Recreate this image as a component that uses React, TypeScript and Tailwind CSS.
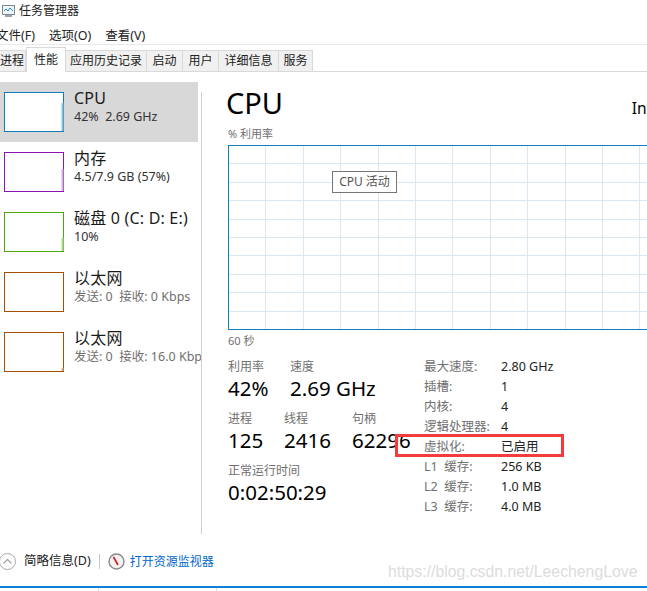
const font = "font-['Noto_Sans','Noto_Sans_CJK_SC',sans-serif]";

function Thumb({ border, fill, fillH }: { border: string; fill: string; fillH: number }) {
  return (
    <svg width="60" height="40" className="shrink-0 block">
      <rect x="0.5" y="0.5" width="59" height="39" fill="white" stroke={border} />
      {fillH > 0 && <rect x="57.5" y={39 - fillH} width="2" height={fillH} fill={fill} />}
    </svg>
  );
}

function SideItem(p: {
  active?: boolean;
  title: string;
  sub: string;
  subMuted?: boolean;
  border: string;
  fill: string;
  fillH: number;
}) {
  return (
    <div className={`flex h-[60px] w-[198px] items-start pl-1 pt-[10px] whitespace-pre ${p.active ? "bg-[#d8d8d8]" : ""}`}>
      <Thumb border={p.border} fill={p.fill} fillH={p.fillH} />
      <div className="ml-[10px] -mt-[5px] flex flex-col">
        <div className="text-[16px] leading-[22px] tracking-[0.2px] text-[#1a1a1a]">{p.title}</div>
        <div className={`text-[12.5px] leading-[16px] ${p.subMuted ? "text-[#707070]" : "text-[#333]"}`}>{p.sub}</div>
      </div>
    </div>
  );
}

function Tab({ label, w, active }: { label: string; w: string; active?: boolean }) {
  return (
    <div
      className={`flex items-center justify-center text-[12px] text-[#222] border-r border-r-[#d9d9d9] ${w} ${
        active
          ? "h-[25px] bg-white border-x border-t border-[#d9d9d9] relative z-10 -mb-px"
          : "h-[21px] bg-[#f0f0f0] border-t border-t-[#d9d9d9]"
      }`}
    >
      {label}
    </div>
  );
}

function Stat({ label, value, w }: { label: string; value: string; w: string }) {
  return (
    <div className={`flex flex-col whitespace-nowrap ${w}`}>
      <div className="text-[12px] leading-[16px] text-[#707070]">{label}</div>
      <div className="text-[20.5px] leading-[27px] text-black">{value}</div>
    </div>
  );
}

function Spec({ k, v }: { k: string; v: string }) {
  return (
    <div className="flex h-[20px] items-center whitespace-pre">
      <div className="w-[77px] text-[12.5px] text-[#707070]">{k}</div>
      <div className="text-[12.5px] text-[#222]">{v}</div>
    </div>
  );
}

function Chart() {
  const xs = [37.4, 74.8, 112.2, 149.6, 187, 224.4, 261.8, 299.2, 336.6, 374, 411.4];
  const ys = [18.4, 36.8, 55.2, 73.6, 92, 110.4, 128.8, 147.2, 165.6];
  return (
    <svg width="419" height="185" className="block">
      <rect width="419" height="185" fill="white" />
      {xs.map((x) => (
        <line key={x} x1={Math.round(x) + 0.5} x2={Math.round(x) + 0.5} y1="0" y2="185" stroke="#d9e8f2" />
      ))}
      {ys.map((y) => (
        <line key={y} x1="0" x2="419" y1={Math.round(y) + 0.5} y2={Math.round(y) + 0.5} stroke="#d9e8f2" />
      ))}
      <line x1="0" x2="419" y1="0.5" y2="0.5" stroke="#117dbb" />
      <line x1="0" x2="419" y1="184.5" y2="184.5" stroke="#117dbb" />
      <line x1="0.5" x2="0.5" y1="0" y2="185" stroke="#117dbb" />
    </svg>
  );
}

export default function App() {
  return (
    <div className={`relative h-[591px] w-[647px] overflow-hidden bg-white ${font}`}>
      {/* title bar */}
      <div className="flex h-[28px] items-start pt-[2px]">
        <svg width="15" height="15" viewBox="0 0 15 15" className="ml-[1px] mt-[1px]">
          <rect x="1.5" y="2.5" width="12" height="9" fill="#eef5f9" stroke="#7a8b96" />
          <polyline points="3,8 5,6 7,8 9,5 12,8" fill="none" stroke="#2f86b8" />
          <rect x="4" y="12" width="7" height="2" fill="#9aa5ad" />
        </svg>
        <span className="ml-[3px] text-[12px] leading-[18px] text-[#222]">任务管理器</span>
      </div>
      {/* menu */}
      <div className="flex h-[16px] items-center gap-[14px] -ml-[4px] text-[12.5px] text-[#222] whitespace-nowrap">
        <span>文件(F)</span>
        <span>选项(O)</span>
        <span>查看(V)</span>
      </div>
      {/* tabs */}
      <div className="h-px bg-[#e8e8e8]" />
      <div className="flex h-[27px] items-end border-b border-[#d9d9d9] -ml-[1px]">
        <Tab label="进程" w="w-[27px]" />
        <Tab label="性能" w="w-[40px]" active />
        <Tab label="应用历史记录" w="w-[81px]" />
        <Tab label="启动" w="w-[36px]" />
        <Tab label="用户" w="w-[36px]" />
        <Tab label="详细信息" w="w-[60px]" />
        <Tab label="服务" w="w-[34px]" />
      </div>
      {/* body */}
      <div className="flex h-[462px]">
        <div className="flex w-[201px] shrink-0 flex-col overflow-hidden pt-[10px]">
          <SideItem active title="CPU" sub="42%  2.69 GHz" border="#117dbb" fill="#8fc1dd" fillH={28} />
          <SideItem title="内存" sub="4.5/7.9 GB (57%)" border="#8b12ae" fill="#d2b3de" fillH={22} />
          <SideItem title="磁盘 0 (C: D: E:)" sub="10%" border="#4da60c" fill="#b3d99a" fillH={13} />
          <SideItem title="以太网" sub="发送: 0  接收: 0 Kbps" subMuted border="#a74f01" fill="#d9b48f" fillH={0} />
          <SideItem title="以太网" sub="发送: 0  接收: 16.0 Kbps" subMuted border="#a74f01" fill="#d9b48f" fillH={3} />
        </div>
        <div className="mt-[20px] h-[442px] w-px shrink-0 bg-[#d0d0d0]" />
        <div className="relative ml-[26px] flex w-[419px] shrink-0 flex-col">
          <div className="flex h-[55px] items-end justify-between pb-[4px]">
            <span className="-ml-[2px] text-[29px] leading-[40px] text-black">CPU</span>
            <span className="mb-[5px] -mr-[18px] text-[15.5px] leading-[20px] text-black">Intel</span>
          </div>
          <div className="h-[18px] text-[11px] leading-[14px] text-[#707070]">% 利用率</div>
          <Chart />
          <div className="mt-[3px] h-[26px] text-[11px] leading-[15px] text-[#707070]">60 秒</div>
          {/* CPU 活动 tooltip */}
          <div className="absolute left-[104px] top-[99px] flex h-[22px] w-[65px] items-center justify-center border border-[#767676] bg-white text-[12px] text-[#555] whitespace-nowrap">
            CPU 活动
          </div>
          {/* stats */}
          <div className="flex">
            <div className="flex w-[196px] shrink-0 flex-col">
              <div className="flex">
                <Stat label="利用率" value="42%" w="w-[62px]" />
                <Stat label="速度" value="2.69 GHz" w="w-[130px]" />
              </div>
              <div className="mt-[9px] flex">
                <Stat label="进程" value="125" w="w-[56px]" />
                <Stat label="线程" value="2416" w="w-[68px]" />
                <Stat label="句柄" value="62296" w="w-[72px]" />
              </div>
              <div className="mt-[9px]">
                <Stat label="正常运行时间" value="0:02:50:29" w="w-[190px]" />
              </div>
            </div>
            <div className="flex flex-col -mt-[2px]">
              <Spec k="最大速度:" v="2.80 GHz" />
              <Spec k="插槽:" v="1" />
              <Spec k="内核:" v="4" />
              <Spec k="逻辑处理器:" v="4" />
              <Spec k="虚拟化:" v="已启用" />
              <Spec k="L1  缓存:" v="256 KB" />
              <Spec k="L2  缓存:" v="1.0 MB" />
              <Spec k="L3  缓存:" v="4.0 MB" />
            </div>
          </div>
        </div>
      </div>
      {/* footer */}
      <div className="flex h-[52px] items-start whitespace-nowrap">
        <div className="mt-[18px] flex items-center">
          <svg width="17" height="19" viewBox="0 0 17 19" className="-ml-[1px]">
            <circle cx="8.5" cy="9.5" r="8" fill="white" stroke="#a8a8a8" />
            <polyline points="4.5,11.5 8.5,7.5 12.5,11.5" fill="none" stroke="#a8a8a8" strokeWidth="1.3" />
          </svg>
          <span className="ml-[8px] text-[12.5px] text-[#222]">简略信息(D)</span>
          <div className="ml-[8px] h-[15px] w-px bg-[#c8c8c8]" />
          <svg width="17" height="17" viewBox="0 0 17 17" className="ml-[8px]">
            <circle cx="8.5" cy="8.5" r="7.5" fill="#f4f1ee" stroke="#8a8a8a" strokeWidth="1.4" />
            <line x1="5.5" y1="4" x2="10" y2="12" stroke="#c8202c" strokeWidth="1.6" />
          </svg>
          <span className="ml-[5px] text-[12px] text-[#0066cc]">打开资源监视器</span>
        </div>
      </div>
      {/* taskbar strip below */}
      <div className="h-[2px] bg-[#0f80d8]" />
      <div className="relative h-[3px] bg-white">
        <div className="absolute left-[98px] top-0 h-[3px] w-px bg-[#e0e0e0]" />
        <div className="absolute left-[216px] top-0 h-[3px] w-px bg-[#e0e0e0]" />
      </div>
      {/* red annotation */}
      <div className="absolute left-[395px] top-[434px] h-[23px] w-[169px] border-[3px] border-[#f33c3c]" />
      {/* watermark */}
      <div className="absolute left-[388px] top-[562px] font-['Liberation_Sans',sans-serif] text-[15.8px] leading-[20px] text-[#dcdcdc] whitespace-nowrap">
        https://blog.csdn.net/LeechengLove
      </div>
    </div>
  );
}
